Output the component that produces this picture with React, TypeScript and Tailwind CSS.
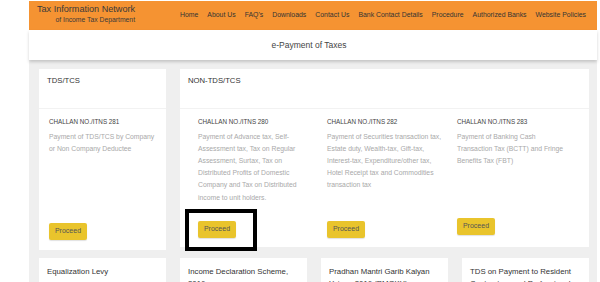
import React from "react";

const navItems = [
  "Home",
  "About Us",
  "FAQ's",
  "Downloads",
  "Contact Us",
  "Bank Contact Details",
  "Procedure",
  "Authorized Banks",
  "Website Policies",
];

function Proceed() {
  return (
    <div className="h-[17px] w-[38px] flex items-center justify-center bg-[#e9c42c] rounded-[2px] text-[7px] text-[#555] shadow-[0_1px_1px_rgba(0,0,0,0.12)]">
      Proceed
    </div>
  );
}

function Desc({ lines }: { lines: string[] }) {
  return (
    <div className="mt-[3.5px] text-[6.8px] leading-[12.2px] text-[#a9a9a9]">
      {lines.map((l, i) => (
        <div key={i} className="whitespace-nowrap">
          {l}
        </div>
      ))}
    </div>
  );
}

function Challan({ no }: { no: string }) {
  return (
    <div className="text-[6.3px] leading-[10px] text-[#444] whitespace-nowrap">
      CHALLAN NO./ITNS {no}
    </div>
  );
}

export default function App() {
  return (
    <div className="relative w-[600px] h-[282px] overflow-hidden bg-white font-['Liberation_Sans',Arial,sans-serif]">
      <div className="ml-[29px] w-[568px] pt-[1px]">
        {/* header */}
        <header className="h-[29px] bg-[#f59332] flex items-start">
          <div className="ml-[8px] pt-[3px] flex flex-col items-end text-[#3a3a3a]">
            <div className="text-[9.1px] leading-[11px] whitespace-nowrap">Tax Information Network</div>
            <div className="mt-[1px] text-[6.8px] leading-[8px] whitespace-nowrap">of Income Tax Department</div>
          </div>
          <nav className="ml-auto mr-[11px] mt-[9px] flex gap-[9px] text-[6.9px] leading-[10px] text-[#333]">
            {navItems.map((n) => (
              <span key={n} className="whitespace-nowrap">
                {n}
              </span>
            ))}
          </nav>
        </header>

        {/* title band */}
        <div className="relative z-10 h-[30px] bg-white flex items-center justify-center pr-[8px] shadow-[0_2px_3px_rgba(0,0,0,0.18)]">
          <span className="text-[8.5px] text-[#444]">e-Payment of Taxes</span>
        </div>

        {/* content */}
        <div className="bg-[#efefef] pl-[10px] pr-[8px] pt-[9px] h-[230px]">
          <div className="grid grid-cols-[127px_409px] gap-[14px] items-start">
            {/* TDS/TCS */}
            <div className="h-[181px] bg-white flex flex-col">
              <div className="h-[40px] border-b border-[#f2f2f2] px-[8px] pt-[6px] text-[7.7px] leading-[12px] text-[#333]">
                TDS/TCS
              </div>
              <div className="flex-1 flex flex-col pl-[10px] pt-[8px] pb-[10px]">
                <Challan no="281" />
                <Desc lines={["Payment of TDS/TCS by Company", "or Non Company Deductee"]} />
                <div className="mt-auto">
                  <Proceed />
                </div>
              </div>
            </div>

            {/* NON-TDS/TCS */}
            <div className="h-[178px] bg-white flex flex-col">
              <div className="h-[40px] border-b border-[#f2f2f2] px-[8px] pt-[6px] text-[7.7px] leading-[12px] text-[#333]">
                NON-TDS/TCS
              </div>
              <div className="flex-1 grid grid-cols-[129px_130px_1fr] pl-[18px] pt-[8px]">
                <div className="flex flex-col pb-[9px]">
                  <Challan no="280" />
                  <Desc
                    lines={[
                      "Payment of Advance tax, Self-",
                      "Assessment tax, Tax on Regular",
                      "Assessment, Surtax, Tax on",
                      "Distributed Profits of Domestic",
                      "Company and Tax on Distributed",
                      "income to unit holders.",
                    ]}
                  />
                  <div className="mt-auto">
                    <Proceed />
                  </div>
                </div>
                <div className="flex flex-col pb-[9px]">
                  <Challan no="282" />
                  <Desc
                    lines={[
                      "Payment of Securities transaction tax,",
                      "Estate duty, Wealth-tax, Gift-tax,",
                      "Interest-tax, Expenditure/other tax,",
                      "Hotel Receipt tax and Commodities",
                      "transaction tax",
                    ]}
                  />
                  <div className="mt-auto">
                    <Proceed />
                  </div>
                </div>
                <div className="flex flex-col pb-[12px]">
                  <Challan no="283" />
                  <Desc
                    lines={[
                      "Payment of Banking Cash",
                      "Transaction Tax (BCTT) and Fringe",
                      "Benefits Tax (FBT)",
                    ]}
                  />
                  <div className="mt-auto">
                    <Proceed />
                  </div>
                </div>
              </div>
            </div>
          </div>

          {/* second row */}
          <div className="mt-[8px] grid grid-cols-[127px_127px_127px_127px] gap-[14px]">
            {[
              "Equalization Levy",
              "Income Declaration Scheme, 2016",
              "Pradhan Mantri Garib Kalyan Yojana 2016 (PMGKY)",
              "TDS on Payment to Resident Contractors and Professionals",
            ].map((t) => (
              <div key={t} className="h-[60px] bg-white px-[8px] pt-[8px] text-[7.8px] leading-[12px] text-[#333]">
                {t}
              </div>
            ))}
          </div>
        </div>
      </div>

      {/* highlight box */}
      <div className="absolute left-[185px] top-[209px] w-[72px] h-[42px] border-[4px] border-black" />
    </div>
  );
}
